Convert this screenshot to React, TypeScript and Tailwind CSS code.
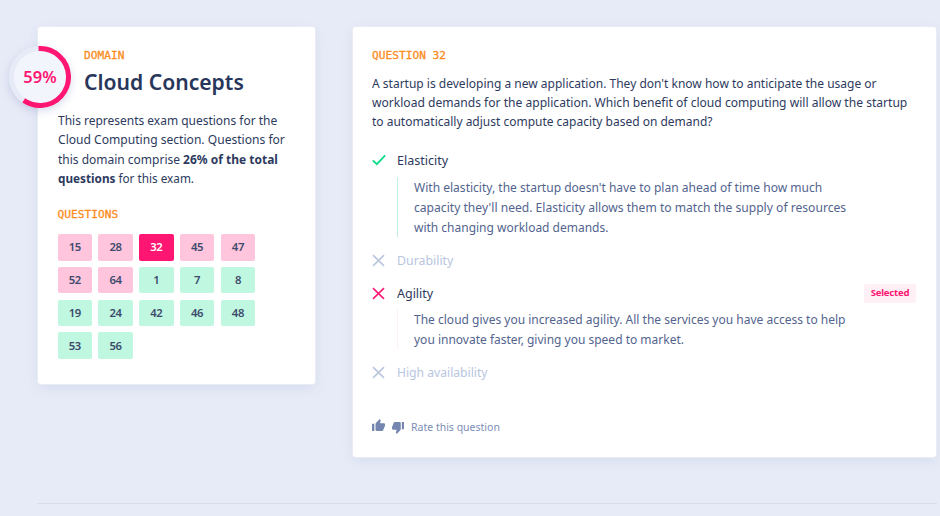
import type { ReactNode } from "react";

const wrong = ["15", "28", "32", "45", "47", "52", "64"];
const right = ["1", "7", "8", "19", "24", "42", "46", "48", "53", "56"];

function Label({ children }: { children: ReactNode }) {
  return (
    <div className="h-4 whitespace-nowrap font-['DejaVu_Sans_Mono',monospace] text-[11.2px] leading-[17px] text-[#fb8c1e] [-webkit-text-stroke:0.3px_#fb8c1e]">
      {children}
    </div>
  );
}

function Line({ className, children }: { className: string; children: ReactNode }) {
  return <span className={`block origin-left whitespace-nowrap ${className}`}>{children}</span>;
}

function Cross({ className }: { className: string }) {
  return (
    <svg className={`size-[13px] ${className}`} viewBox="0 0 13 13" fill="none" stroke="currentColor" strokeWidth="1.5">
      <path d="M1 1.1 12 11.9M12 1.1 1 11.9" />
    </svg>
  );
}

const card = "rounded-[3px] bg-white shadow-[0_0_0_1px_#eaecf3,0_4px_12px_rgba(185,200,225,0.4)]";
const cell = "flex h-[26.3px] items-center justify-center rounded-[2px] pt-px text-[11.3px] font-semibold tracking-[-0.4px]";

export default function App() {
  return (
    <main className="relative h-[516px] w-[940px] overflow-hidden bg-[#e7ebf7] pt-[27px] pl-[38px] font-['Noto_Sans',sans-serif] text-[13px] text-[#2d3a5e]">
      <div className="flex h-[476px] w-[899px] items-start gap-[38px]">
        <section className={`relative h-[357px] w-[277px] shrink-0 pt-5 pl-[19.6px] ${card}`}>
          <div className="absolute top-[19px] -left-[29px] size-[62px] rounded-full shadow-[0_3px_9px_rgba(120,140,190,0.3)]">
            <svg viewBox="0 0 62 62" className="size-[62px]">
              <circle cx="31" cy="31" r="31" fill="#e6ebf7" />
              <circle cx="31" cy="31" r="26" fill="#f3f5fc" />
              <circle cx="31" cy="31" r="28.5" fill="none" stroke="#ff1672" strokeWidth="5" pathLength="100" strokeDasharray="60.5 39.5" transform="rotate(-93 31 31)" />
            </svg>
            <span className="absolute inset-0 flex items-center justify-center text-[16.5px] font-semibold text-[#ff1672]">59%</span>
          </div>
          <div className="h-[64px] pl-[26.4px]">
            <Label>DOMAIN</Label>
            <h1 className="mt-[3px] origin-left scale-x-[0.96] text-[22px] leading-[30px] font-semibold whitespace-nowrap text-[#27365a]">Cloud Concepts</h1>
          </div>
          <p className="h-[95px] leading-[19.3px]">
            <Line className="scale-x-[0.921]">This represents exam questions for the</Line>
            <Line className="scale-x-[0.929]">Cloud Computing section. Questions for</Line>
            <Line className="scale-x-[0.922]">this domain comprise <b className="font-bold">26% of the total</b></Line>
            <Line className="scale-x-[0.903]"><b className="font-bold">questions</b> for this exam.</Line>
          </p>
          <Label>QUESTIONS</Label>
          <div className="mt-[12.3px] grid grid-cols-[repeat(5,34.4px)] gap-x-[6.4px] gap-y-[6.4px]">
            {wrong.map((n) => (
              <div key={n} className={`${cell} ${n === "32" ? "bg-[#ff1672] text-white" : "bg-[#ffc5dd] text-[#3d4a6c]"}`}>{n}</div>
            ))}
            {right.map((n) => (
              <div key={n} className={`${cell} bg-[#c0f7e0] text-[#3d4a6c]`}>{n}</div>
            ))}
          </div>
        </section>

        <section className={`h-[430px] w-[583px] shrink-0 pt-5 pl-[19px] ${card}`}>
          <Label>QUESTION 32</Label>
          <p className="mt-[11px] h-[76px] leading-[19.2px]">
            <Line className="w-max scale-x-[0.924]">A startup is developing a new application. They don't know how to anticipate the usage or</Line>
            <Line className="w-max scale-x-[0.929]">workload demands for the application. Which benefit of cloud computing will allow the startup</Line>
            <Line className="w-max scale-x-[0.922]">to automatically adjust compute capacity based on demand?</Line>
          </p>
          <div className="flex h-5 items-center gap-[11px]">
            <svg className="h-[12px] w-[14px]" viewBox="0 0 14 12" fill="none" stroke="#10dd8c" strokeWidth="1.8"><path d="M.8 6.3 4.8 10.2 13.2 1.3" /></svg>
            <Line className="mt-0.5 scale-x-[0.965]">Elasticity</Line>
          </div>
          <div className="mt-[7px] ml-[25px] h-[60px] border-l border-[#c0f1e0] pl-4 leading-5 text-[#52648e]">
            <Line className="scale-x-[0.926]">With elasticity, the startup doesn't have to plan ahead of time how much</Line>
            <Line className="scale-x-[0.931]">capacity they'll need. Elasticity allows them to match the supply of resources</Line>
            <Line className="scale-x-[0.922]">with changing workload demands.</Line>
          </div>
          <div className="mt-[13px] flex h-5 items-center gap-3 text-[#b8c5de]">
            <Cross className="" />
            <Line className="mt-0.5 scale-x-[0.95]">Durability</Line>
          </div>
          <div className="mt-[13px] flex h-5 items-center gap-3 pr-5">
            <Cross className="text-[#ff1672]" />
            <Line className="mt-0.5 scale-x-[0.96]">Agility</Line>
            <span className="ml-auto flex h-[19px] w-[52px] items-center justify-center rounded-[2px] bg-[#fff0f6] text-[9.5px] font-bold tracking-[-0.2px] text-[#ff1672]">Selected</span>
          </div>
          <div className="mt-[6px] ml-[25px] h-10 border-l border-[#fff0f6] pl-4 leading-5 text-[#52648e]">
            <Line className="scale-x-[0.924]">The cloud gives you increased agility. All the services you have access to help</Line>
            <Line className="scale-x-[0.923]">you innovate faster, giving you speed to market.</Line>
          </div>
          <div className="mt-[13px] flex h-5 items-center gap-3 text-[#b8c5de]">
            <Cross className="" />
            <Line className="mt-0.5 scale-x-[0.933]">High availability</Line>
          </div>
          <div className="mt-[35px] flex h-5 items-center text-[11px] text-[#7c8eb6]">
            <svg className="-mt-1 h-[12px] w-[13px]" viewBox="1 1 22 20" preserveAspectRatio="none" fill="#7587b0"><path d="M1 21h4V9H1v12zm22-11c0-1.1-.9-2-2-2h-6.31l.95-4.57.03-.32c0-.41-.17-.79-.44-1.06L14.17 1 7.59 7.59C7.22 7.95 7 8.45 7 9v10c0 1.1.9 2 2 2h9c.83 0 1.54-.5 1.84-1.22l3.02-7.05c.09-.23.14-.47.14-.73v-2z" /></svg>
            <svg className="mt-0.5 ml-[7px] h-[12px] w-[12px]" viewBox="1 3 22 20" preserveAspectRatio="none" fill="#7587b0"><path d="M15 3H6c-.83 0-1.54.5-1.84 1.22l-3.02 7.05c-.09.23-.14.47-.14.73v2c0 1.1.9 2 2 2h6.31l-.95 4.57-.03.32c0 .41.17.79.44 1.06L9.83 23l6.59-6.59c.36-.36.58-.86.58-1.41V5c0-1.1-.9-2-2-2zm4 0v12h4V3h-4z" /></svg>
            <Line className="ml-[7px] scale-x-[0.955]">Rate this question</Line>
          </div>
        </section>
      </div>
      <div className="-ml-px h-px w-[900px] bg-[#d8deeb]" />
    </main>
  );
}
